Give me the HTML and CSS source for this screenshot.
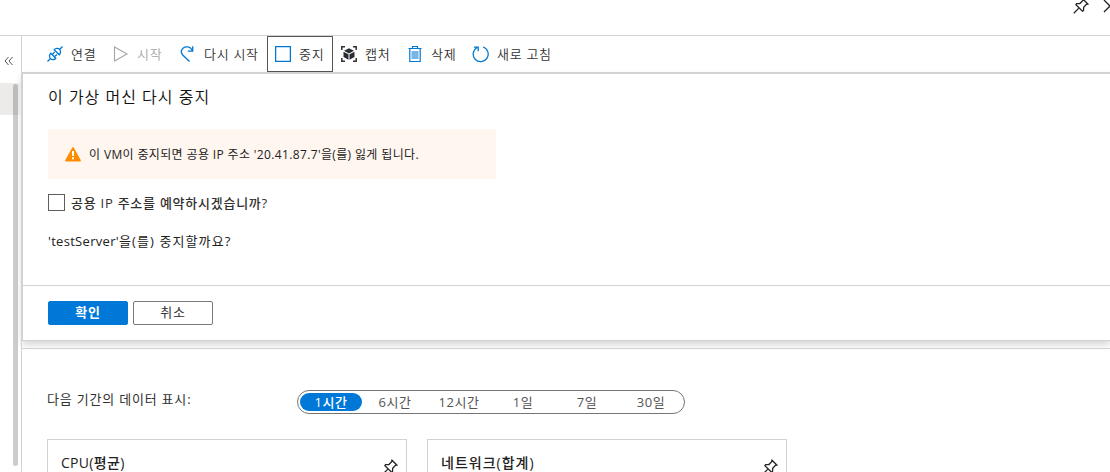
FILE: index.html
```html
<!DOCTYPE html>
<html lang="ko">
<head>
<meta charset="utf-8">
<title>testServer</title>
<link rel="stylesheet" href="styles.css">
</head>
<body>
<svg class="defs" width="0" height="0">
  <symbol id="pin" viewBox="0 0 16 16">
    <path d="M.8 15.200L5.600 10.400M10 1.200L14.800 6 13.400 6.300 10.700 9.300 10.500 12.600 9.500 13.200 2.900 6.600 3.600 5.700 6.900 5.500 9.700 2.700z" fill="none" stroke="currentColor" stroke-width="1.300"/>
  </symbol>
</svg>
<div class="app">
  <header class="header">
    <svg class="header-pin" width="16" height="16"><use href="#pin"/></svg>
    <svg class="header-close" width="14" height="14" viewBox="0 0 14 14"><path d="M1 1l12 12M13 1L1 13" stroke="currentColor" stroke-width="1.300"/></svg>
  </header>
  <div class="body">
    <aside class="side">
      <svg class="collapse" width="10" height="10" viewBox="0 0 10 10"><path d="M4.500 1L1 5l3.500 4M8.500 1L5 5l3.500 4" fill="none" stroke="#555" stroke-width="1"/></svg>
      <div class="selected"></div>
      <div class="scroll"></div>
    </aside>
    <main class="main">
      <nav class="toolbar">
        <button class="tool">
          <svg width="16" height="16" viewBox="0 0 16 16" fill="none" stroke="#0078d4" stroke-width="1.300"><path d="M.5 15.500l3-3M12.500 3.500l3-3M3.800 7.200l5 5c-1.500 1.700-3.800 1.900-5.300.4s-1.300-3.900.3-5.400zM7.200 3.800l5 5c1.600-1.500 1.800-3.900.3-5.400s-3.800-1.300-5.300.4zM5.200 8.600L7.600 6M7.400 10.800L10 8.400"/></svg>
          <span>연결</span></button>
        <button class="tool start">
          <svg width="16" height="16" viewBox="0 0 16 16" fill="none" stroke="#a6a6a6" stroke-width="1.100"><path d="M1.500 1v14L14 8z"/></svg>
          <span>시작</span></button>
        <button class="tool restart">
          <svg width="16" height="16" viewBox="0 0 16 16" fill="none" stroke="#0078d4" stroke-width="1.300"><path d="M9.500 15.500L2.700 9C.8 6.500 1 3.700 3.300 1.900 6-.1 10.500.6 12.300 4.500M12.700.3v4.900H7.800"/></svg>
          <span>다시 시작</span></button>
        <button class="tool stop">
          <svg width="16" height="16" viewBox="0 0 16 16"><path d="M.6.6h14.800v14.800H.6z" fill="#fff" stroke="#0078d4" stroke-width="1.300"/></svg>
          <span>중지</span></button>
        <button class="tool">
          <svg width="16" height="16" viewBox="0 0 16 16"><path d="M.8 4V.8H4M12 .8h3.200V4M15.200 12v3.200H12M4 15.200H.8V12" fill="none" stroke="#323130" stroke-width="1.500"/><path d="M8 2.200l5 2.600L8 7.400 3 4.800zM2.500 5.700l5 2.600v5.500l-5-2.700zM13.500 5.700l-5 2.600v5.500l5-2.700z" fill="#292d35"/></svg>
          <span>캡처</span></button>
        <button class="tool">
          <svg width="16" height="16" viewBox="0 0 16 16"><path d="M4.500 5h7v8h-7z" fill="#75b5e8"/><path d="M1.500 2.500h13M5.500 2.500v-2h5v2M2.800 2.500v13h10.400v-13" fill="none" stroke="#0078d4" stroke-width="1.200"/></svg>
          <span>삭제</span></button>
        <button class="tool refresh">
          <svg width="18" height="17" viewBox="0 0 18 17" fill="none" stroke="#0078d4" stroke-width="1.300"><path d="M11 1a7.500 7.500 0 1 1-5.800.5M2 1.200h4.200v4"/></svg>
          <span>새로 고침</span></button>
      </nav>
      <section class="dialog">
        <div class="dialog-body">
          <h1 class="title">이 가상 머신 다시 중지</h1>
          <div class="warning">
            <svg width="16" height="15" viewBox="0 0 16 15"><path d="M8 1.200L14.800 13.500H1.200z" fill="#ff8c00" stroke="#ff8c00" stroke-width="2" stroke-linejoin="round"/><path d="M7 4h2v5H7zM7 10.300h2v2H7z" fill="#fff"/></svg>
            <span>이 VM이 중지되면 공용 IP 주소 '20.41.87.7'을(를) 잃게 됩니다.</span>
          </div>
          <label class="reserve"><i class="check"></i><span>공용 IP 주소를 예약하시겠습니까?</span></label>
          <p class="question"><span class="name">'testServer'</span>을(를) 중지할까요?</p>
        </div>
        <footer class="actions">
          <button class="btn primary">확인</button>
          <button class="btn">취소</button>
        </footer>
      </section>
      <section class="metrics">
        <div class="period">
          <span class="period-label">다음 기간의 데이터 표시:</span>
          <div class="pills">
            <span class="pill active">1시간</span><span class="pill">6시간</span><span class="pill">12시간</span><span class="pill">1일</span><span class="pill">7일</span><span class="pill">30일</span>
          </div>
        </div>
        <div class="cards">
          <article class="card"><span>CPU(평균)</span><svg width="16" height="16"><use href="#pin"/></svg></article>
          <article class="card network"><span>네트워크(합계)</span><svg width="16" height="16"><use href="#pin"/></svg></article>
        </div>
      </section>
    </main>
  </div>
</div>
</body>
</html>
```
FILE: styles.css
```css
* { box-sizing: border-box; }
body {
  margin: 0;
  background: #fff;
  color: #323130;
  font: 13px/18px "Open Sans", "Noto Sans CJK KR", sans-serif;
}
button { font: inherit; color: inherit; background: none; border: 0; padding: 0; }
svg { flex: none; }
.defs { display: block; }
.app { height: 472px; overflow: hidden; display: flex; flex-direction: column; }
.header { height: 36px; flex: none; display: flex; align-items: flex-start; justify-content: flex-end; border-bottom: 1px solid #d2d2d2; color: #222; }
.header-pin { margin: -2px 14px 0 0; }
.header-close { margin: -1px -7px 0 0; }
.body { flex: 1; min-height: 0; display: flex; }
.side { width: 22px; flex: none; border-right: 1px solid #d2d2d2; padding-top: 20px; position: relative; }
.collapse { display: block; margin-left: 4px; }
.selected { height: 32px; margin-top: 17px; background: #edebe9; }
.scroll { position: absolute; left: 13px; top: 48px; width: 5px; height: 382px; border-radius: 3px; background: rgba(0, 0, 0, .2); }
.main { flex: 1; min-width: 0; display: flex; flex-direction: column; }

.toolbar { height: 36px; flex: none; display: flex; padding-left: 17px; letter-spacing: .7px; white-space: nowrap; font-weight: 350; }
.tool { width: 66px; display: flex; align-items: center; gap: 8px; padding-left: 8px; letter-spacing: inherit; }
.start { width: 67px; color: #a6a6a6; }
.restart { width: 95px; }
.stop { border: 1px solid #555; padding-left: 7px; }
.refresh { gap: 7px; padding-left: 7px; }

.dialog { height: 269px; flex: none; display: flex; flex-direction: column; border: 1px solid #d2d2d2; border-top-width: 2px; border-right: 0; box-shadow: 0 4px 7px rgba(0, 0, 0, .16); }
.dialog-body { height: 211px; padding: 11px 0 0 25px; }
.title { margin: 0 0 20px; font-size: 16px; line-height: 24px; font-weight: 350; letter-spacing: 1px; color: #111; }
.warning { width: 448px; height: 50px; display: flex; align-items: center; gap: 8px; padding-left: 17px; background: #fff6f0; border-radius: 2px; font-size: 12px; color: #222; letter-spacing: .36px; }
.warning span { padding-top: 2px; }
.reserve { display: flex; align-items: center; gap: 6px; margin-top: 15px; font-weight: 500; letter-spacing: .75px; }
.check { width: 17px; height: 17px; margin-top: -2px; border: 1px solid #605e5c; }
.question { margin: 20px 0 0; letter-spacing: 1.1px; color: #222; }
.name { letter-spacing: .3px; }
.actions { flex: 1; border-top: 1px solid #d2d2d2; padding: 15px 0 0 25px; display: flex; gap: 5px; }
.btn { width: 80px; height: 24px; border: 1px solid #7a7a7a; border-radius: 2px; line-height: 18px; padding-bottom: 2px; letter-spacing: .7px; }
.primary { background: #0078d7; border-color: #0078d7; color: #fff; font-weight: 700; }

.metrics { margin-top: 7px; flex: 1; border-top: 1px solid #d2d2d2; padding: 41px 0 0 25px; }
.period { display: flex; height: 24px; }
.period-label { width: 250px; letter-spacing: .8px; }
.pills { width: 388px; height: 24px; display: flex; align-items: center; border: 1px solid #767676; border-radius: 12px; padding-left: 2px; color: #555; }
.pill { width: 64px; height: 18px; text-align: center; line-height: 18px; letter-spacing: .6px; }
.active { width: 62px; border-radius: 9px; background: #0078d7; color: #fff; font-weight: 500; margin-right: 1px; }
.cards { display: flex; gap: 20px; margin-top: 25px; }
.card { width: 360px; height: 80px; display: flex; justify-content: space-between; border: 1px solid #d2d2d2; padding: 14px 8px 0 13px; font-size: 14px; font-weight: 500; color: #222; }
.card span { letter-spacing: .3px; }
.network span { letter-spacing: 1px; }
.card svg { margin-top: 5px; }
```
